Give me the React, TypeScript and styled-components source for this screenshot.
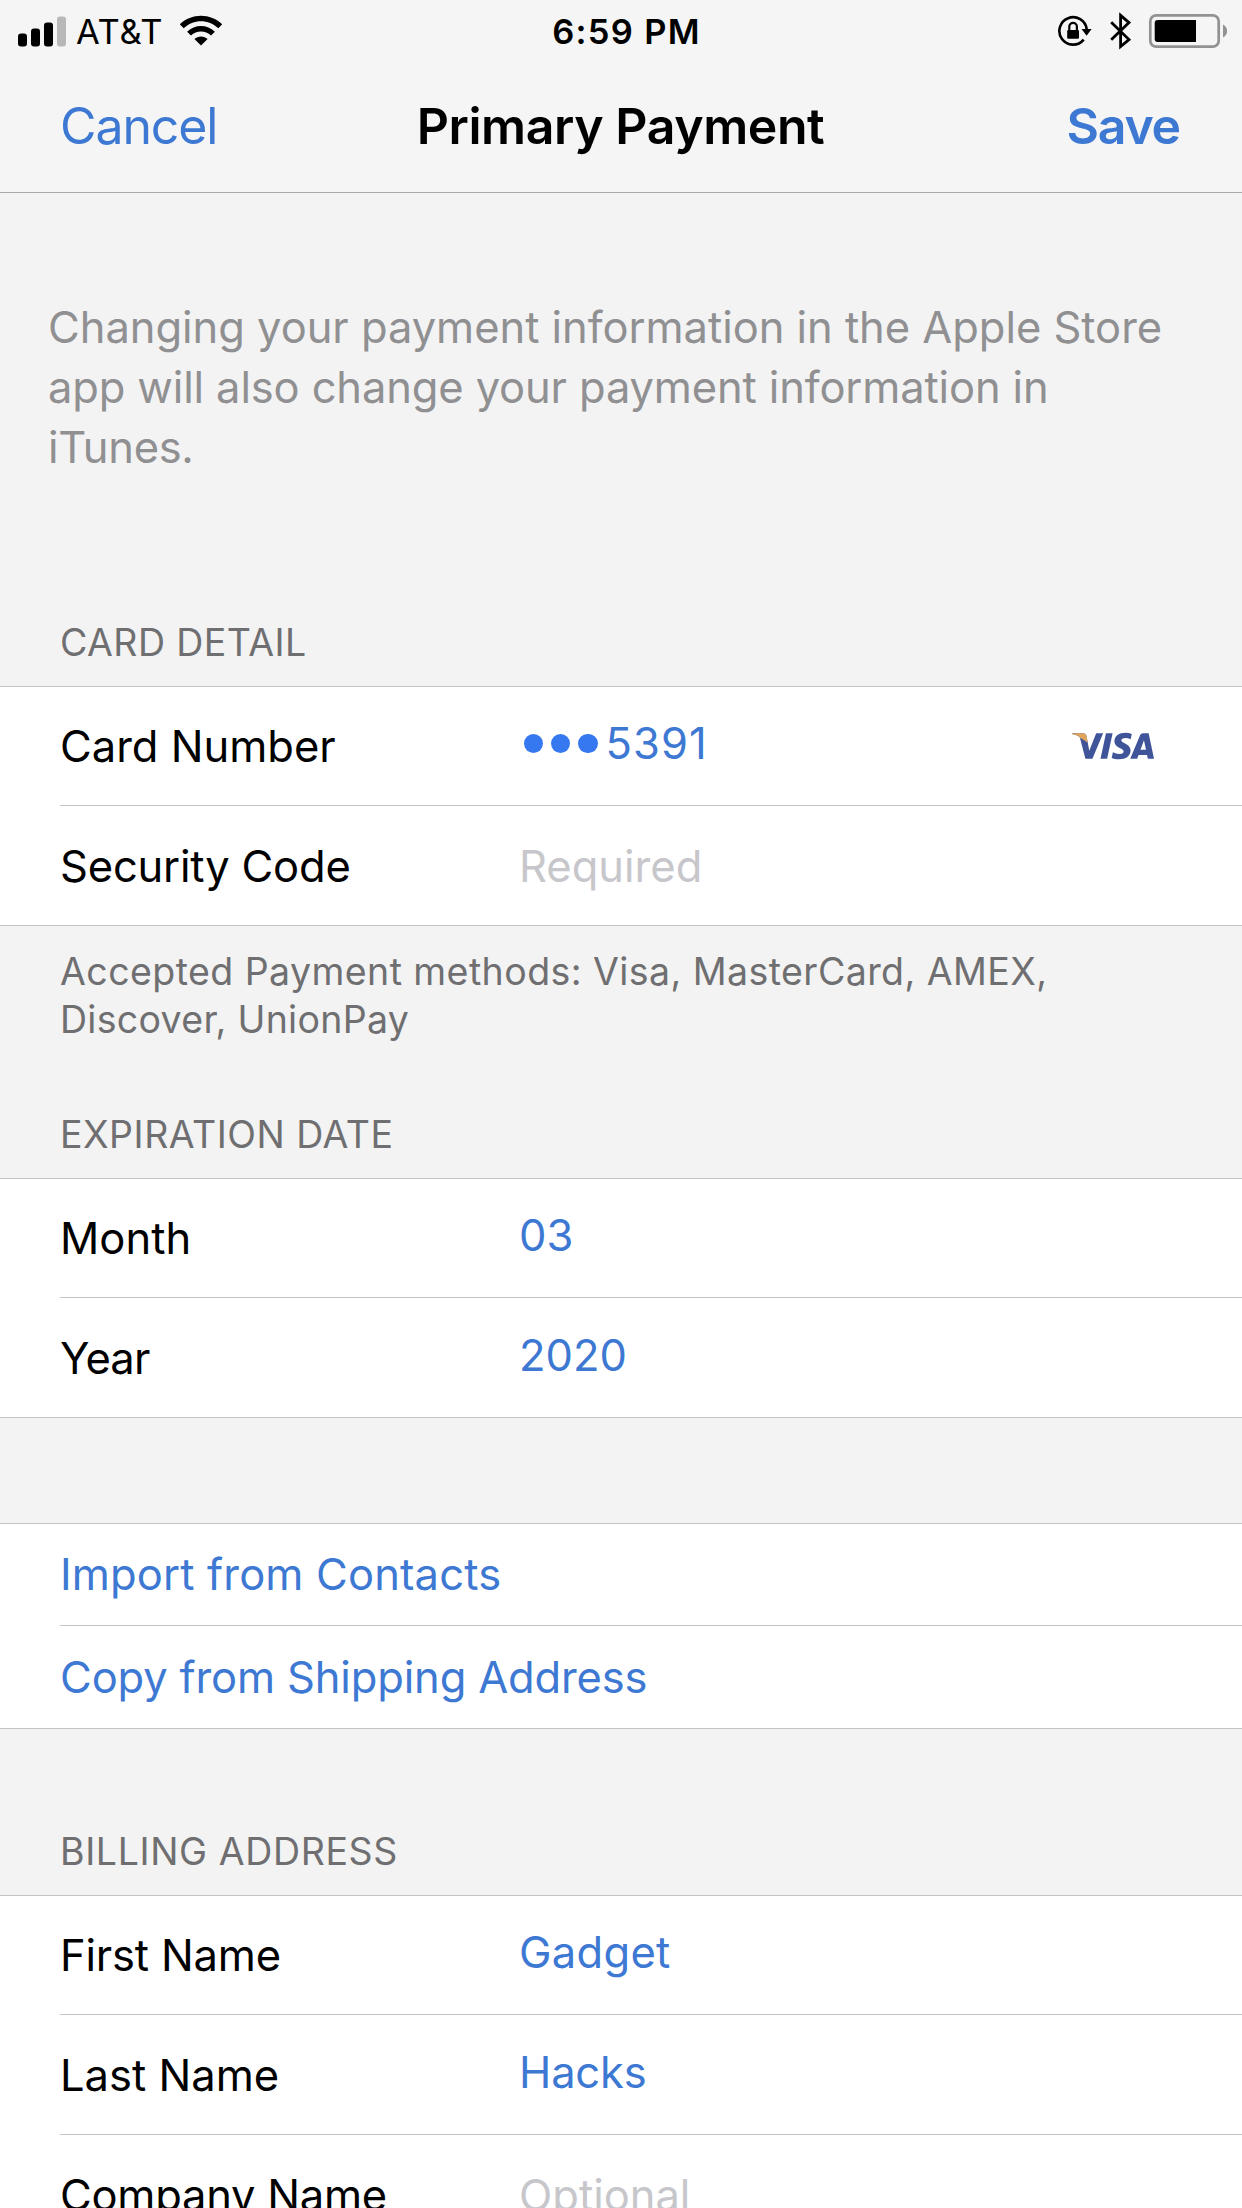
import React from "react";
import styled, { createGlobalStyle } from "styled-components";
import { SiVisa } from "react-icons/si";

const color = {
  bar: "#f5f5f5",
  page: "#f3f3f3",
  cell: "#ffffff",
  blue: "#3d78d3",
  dot: "#3578f0",
  line: "#c4c4c6",
  barLine: "#a9a9ab",
  caption: "#6f6f71",
  note: "#909092",
  placeholder: "#c7c7cb",
};

const GlobalStyle = createGlobalStyle`
  *, *::before, *::after { box-sizing: border-box; }
  html, body { margin: 0; padding: 0; background: ${color.page}; }
  body { overflow: hidden; }
`;

const Screen = styled.main`
  display: flex;
  flex-direction: column;
  width: 1242px;
  height: 2208px;
  overflow: hidden;
  background: ${color.page};
  color: #000;
  font-family: Inter, "Liberation Sans", sans-serif;
  font-size: 43.5px;
  font-weight: 400;
  line-height: 60px;
`;

const Header = styled.header`
  flex: none;
  height: 193px;
  background: ${color.bar};
  border-bottom: 1px solid ${color.barLine};
`;

const StatusBar = styled.div`
  display: grid;
  grid-template-columns: 1fr auto 1fr;
  align-items: center;
  height: 62px;
  padding: 0 14px 0 18px;
  font-size: 34.5px;
  line-height: 42px;
`;

const StatusSide = styled.div<{ $end?: boolean }>`
  display: flex;
  align-items: center;
  justify-content: ${(p) => (p.$end ? "flex-end" : "flex-start")};
`;

const Carrier = styled.span`
  margin: 0 16px 0 9px;
  padding-top: 1px;
  letter-spacing: 0.7px;
`;

const Clock = styled.time`
  padding: 1px 0 0 7px;
  font-weight: 560;
  letter-spacing: 1.3px;
`;

const Icon = styled.svg<{ $gap?: number }>`
  display: block;
  flex: none;
  margin-left: ${(p) => p.$gap ?? 0}px;
`;

const NavBar = styled.nav`
  display: grid;
  grid-template-columns: 1fr auto 1fr;
  align-items: center;
  height: 130px;
  padding: 0 62px 3px 60px;
  font-size: 50px;
`;

const NavButton = styled.button<{ $primary?: boolean }>`
  justify-self: ${(p) => (p.$primary ? "end" : "start")};
  padding: 0;
  border: 0;
  background: none;
  color: ${color.blue};
  font: inherit;
  font-weight: ${(p) => (p.$primary ? 600 : 400)};
  letter-spacing: ${(p) => (p.$primary ? -1.2 : -1.1)}px;
`;

const Title = styled.h1`
  margin: 0;
  padding-left: 1px;
  font: inherit;
  font-weight: 600;
  letter-spacing: -0.42px;
`;

const Intro = styled.p`
  margin: 0;
  padding: 104px 60px 0 48px;
  color: ${color.note};
`;

const Line = styled.span<{ $track?: number }>`
  display: block;
  white-space: nowrap;
  letter-spacing: ${(p) => p.$track ?? 0}px;
`;

const SectionTitle = styled.h2<{ $height: number; $track: number }>`
  display: flex;
  align-items: flex-end;
  flex: none;
  height: ${(p) => p.$height}px;
  margin: 0;
  padding: 0 60px 19.5px;
  color: ${color.caption};
  font-size: 37.5px;
  font-weight: 400;
  line-height: 48px;
  letter-spacing: ${(p) => p.$track}px;
`;

const Footnote = styled.p`
  margin: 0 0 -1px;
  padding: 22px 60px 0;
  color: ${color.caption};
  font-size: 37.5px;
  line-height: 48px;
`;

const Group = styled.section<{ $before?: number }>`
  flex: none;
  margin-top: ${(p) => p.$before ?? 0}px;
  padding-left: 60px;
  background: ${color.cell};
  border-top: 1px solid ${color.line};
  border-bottom: 1px solid ${color.line};
`;

const Row = styled.div`
  display: grid;
  grid-template-columns: 459px 1fr auto;
  align-items: center;
  height: 120px;
  padding-right: 88px;
  border-bottom: 1px solid ${color.line};

  &:first-child { height: 119px; }
  &:last-child:not(:first-child) { height: 119px; border-bottom: 0; }
`;

const LinkRow = styled.a`
  display: flex;
  align-items: center;
  height: 102px;
  color: ${color.blue};
  border-bottom: 1px solid ${color.line};

  &:first-child { padding-bottom: 1px; }
  &:last-child { border-bottom: 0; }
`;

const Label = styled.label<{ $track?: number }>`
  letter-spacing: ${(p) => p.$track ?? 0}px;
`;

const Value = styled.span<{ $track?: number }>`
  display: flex;
  align-items: center;
  padding-bottom: 6px;
  color: ${color.blue};
  letter-spacing: ${(p) => p.$track ?? 0}px;
`;

const Placeholder = styled.span`
  color: ${color.placeholder};
`;

const Mask = styled.span`
  display: flex;
  gap: 7.8px;
  margin: 1px 7.5px 0 4.5px;
`;

const Dot = styled.i`
  width: 19.6px;
  height: 19.6px;
  border-radius: 50%;
  background: ${color.dot};
`;

const CardBrand = styled.span`
  position: relative;
  display: block;
  width: 82px;
  height: 82px;
  color: #40549a;
`;

const CardBrandAccent = styled(SiVisa)`
  position: absolute;
  inset: 0;
  color: #dfa55c;
  clip-path: polygon(0 30%, 17% 30%, 19% 38%, 19% 46%, 15% 43%, 8% 39%, 0 38%);
`;

function Signal() {
  return (
    <Icon width="49" height="31" viewBox="0 0 49 31">
      <rect x="0" y="17.5" width="9" height="13" rx="3" />
      <rect x="13" y="12.5" width="9" height="18" rx="3" />
      <rect x="26" y="6.5" width="9" height="24" rx="3" />
      <rect x="39" y="0.5" width="9" height="30" rx="3" fill="#b8b8b8" />
    </Icon>
  );
}

function Wifi() {
  return (
    <Icon width="44" height="32" viewBox="0 0 44 32">
      <path d="M0.8 9.2C12.6 -2.2 31.4 -2.2 43.2 9.2L39.3 13.2C29.7 3.8 14.3 3.8 4.7 13.2Z" />
      <path d="M8.1 16.7C15.9 9.2 28.1 9.2 35.9 16.7L32 20.6C26.4 15.2 17.6 15.2 12 20.6Z" />
      <path d="M15.4 24.1C19.1 20.6 24.9 20.6 28.6 24.1L22 30.6Z" />
    </Icon>
  );
}

function RotationLock() {
  return (
    <Icon width="34" height="32" viewBox="0 0 34 32">
      <path d="M25.7 24.6A13.7 13.7 0 1 1 28.7 14.4" fill="none" stroke="#000" strokeWidth="2.6" />
      <path d="M23.6 14.1H33.6L28.6 20.8Z" />
      <rect x="9.2" y="15" width="11.8" height="8.8" rx="1.2" />
      <path d="M11.3 15.5V11.6A3.8 3.8 0 0 1 18.9 11.6V15.5" fill="none" stroke="#000" strokeWidth="2.2" />
    </Icon>
  );
}

function Bluetooth() {
  return (
    <Icon $gap={18} width="22" height="38" viewBox="0 0 22 38">
      <path d="M1.2 10.2L19 27.6L10.6 34.6V3.4L19 10.6L1.2 27.8" fill="none" stroke="#000" strokeWidth="2.8" />
    </Icon>
  );
}

function Battery() {
  return (
    <Icon $gap={16} width="80" height="36" viewBox="0 0 80 36">
      <rect x="2.3" y="2.3" width="68.4" height="31.4" rx="6" fill="none" stroke="#929292" strokeWidth="2.7" />
      <path d="M9.7 7H48V29H9.7A3 3 0 0 1 6.7 26V10A3 3 0 0 1 9.7 7Z" />
      <path d="M75 11.6C80.4 14 80.4 22 75 24.4Z" fill="#929292" />
    </Icon>
  );
}

export default function App() {
  return (
    <Screen>
      <GlobalStyle />
      <Header>
        <StatusBar>
          <StatusSide>
            <Signal />
            <Carrier>AT&amp;T</Carrier>
            <Wifi />
          </StatusSide>
          <Clock>6:59 PM</Clock>
          <StatusSide $end>
            <RotationLock />
            <Bluetooth />
            <Battery />
          </StatusSide>
        </StatusBar>
        <NavBar>
          <NavButton>Cancel</NavButton>
          <Title>Primary Payment</Title>
          <NavButton $primary>Save</NavButton>
        </NavBar>
      </Header>

      <Intro>
        <Line $track={-0.04}>Changing your payment information in the Apple Store</Line>
        <Line $track={-0.14}>app will also change your payment information in</Line>
        <Line $track={-0.3}>iTunes.</Line>
      </Intro>

      <SectionTitle $height={209} $track={0.41}>CARD DETAIL</SectionTitle>
      <Group>
        <Row>
          <Label>Card Number</Label>
          <Value $track={1.1}>
            <Mask>
              <Dot />
              <Dot />
              <Dot />
            </Mask>
            5391
          </Value>
          <CardBrand>
            <SiVisa size={82} />
            <CardBrandAccent size={82} />
          </CardBrand>
        </Row>
        <Row>
          <Label $track={-0.19}>Security Code</Label>
          <Placeholder>Required</Placeholder>
        </Row>
      </Group>
      <Footnote>
        <Line $track={0.43}>Accepted Payment methods: Visa, MasterCard, AMEX,</Line>
        <Line $track={0.3}>Discover, UnionPay</Line>
      </Footnote>

      <SectionTitle $height={135} $track={0.5}>EXPIRATION DATE</SectionTitle>
      <Group>
        <Row>
          <Label $track={0.07}>Month</Label>
          <Value>03</Value>
        </Row>
        <Row>
          <Label $track={-0.8}>Year</Label>
          <Value>2020</Value>
        </Row>
      </Group>

      <Group $before={105}>
        <LinkRow>
          <Line $track={0.15}>Import from Contacts</Line>
        </LinkRow>
        <LinkRow>
          <Line $track={-0.15}>Copy from Shipping Address</Line>
        </LinkRow>
      </Group>

      <SectionTitle $height={166} $track={0.62}>BILLING ADDRESS</SectionTitle>
      <Group>
        <Row>
          <Label $track={-0.18}>First Name</Label>
          <Value $track={0.3}>Gadget</Value>
        </Row>
        <Row>
          <Label>Last Name</Label>
          <Value $track={-0.2}>Hacks</Value>
        </Row>
        <Row>
          <Label $track={-0.25}>Company Name</Label>
          <Placeholder>Optional</Placeholder>
        </Row>
      </Group>
    </Screen>
  );
}
